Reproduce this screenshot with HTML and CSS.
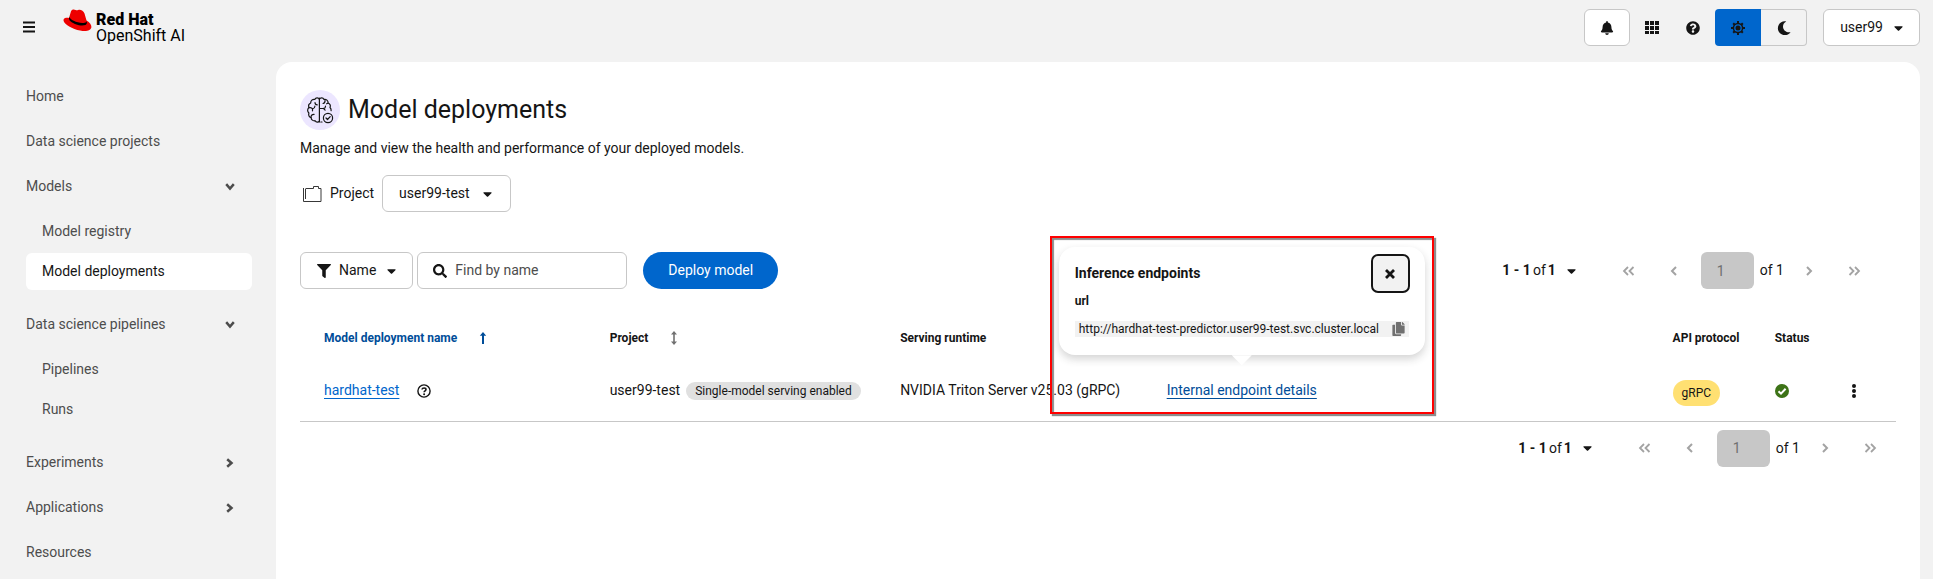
FILE: index.html
```html
<!DOCTYPE html>
<html lang="en">
<head>
<meta charset="utf-8">
<meta name="viewport" content="width=device-width, initial-scale=1">
<title>Model deployments | Red Hat OpenShift AI</title>
<link rel="stylesheet" href="styles.css">
</head>
<body>
<svg class="sprite" aria-hidden="true">
  <symbol id="bell" viewBox="0 0 448 512"><path d="M224 512c35.32 0 63.97-28.65 63.97-64H160.03c0 35.35 28.65 64 63.97 64zm215.39-149.71c-19.32-20.76-55.47-51.99-55.47-154.29 0-77.7-54.48-139.9-127.94-155.16V32c0-17.67-14.32-32-31.98-32s-31.98 14.33-31.98 32v20.84C118.56 68.1 64.08 130.3 64.08 208c0 102.3-36.15 133.53-55.47 154.29-6 6.45-8.66 14.16-8.61 21.71.11 16.4 12.98 32 32.1 32h383.8c19.12 0 32-15.6 32.1-32 .05-7.55-2.61-15.27-8.61-21.71z"/></symbol>
  <symbol id="grid" viewBox="0 0 14 14"><path d="M0 0h4v4H0zM5 0h4v4H5zM10 0h4v4h-4zM0 5h4v4H0zM5 5h4v4H5zM10 5h4v4h-4zM0 10h4v3H0zM5 10h4v3H5zM10 10h4v3h-4z"/></symbol>
  <symbol id="help" viewBox="0 0 512 512"><path d="M504 256c0 136.997-111.043 248-248 248S8 392.997 8 256C8 119.083 119.043 8 256 8s248 111.083 248 248zM262.655 90c-54.497 0-89.255 22.957-116.549 63.758-3.536 5.286-2.353 12.415 2.715 16.258l34.699 26.31c5.205 3.947 12.621 3.008 16.665-2.122 17.864-22.658 30.113-35.797 57.303-35.797 20.429 0 45.698 13.148 45.698 32.958 0 14.976-12.363 22.667-32.534 33.976C247.128 238.528 216 254.941 216 296v4c0 6.627 5.373 12 12 12h56c6.627 0 12-5.373 12-12v-1.333c0-28.462 83.186-29.647 83.186-106.667 0-58.002-60.165-102-116.531-102zM256 338c-25.365 0-46 20.635-46 46 0 25.364 20.635 46 46 46s46-20.636 46-46c0-25.365-20.635-46-46-46z"/></symbol>
  <symbol id="help-outline" viewBox="0 0 14 14"><circle cx="7" cy="7" r="6.1" fill="none" stroke="currentColor" stroke-width="1.4"/><path d="M5 5.5C5.2 3.5 9 3.500 9 5.500C9 6.900 7.100 6.800 7.100 8.300" fill="none" stroke="currentColor" stroke-width="1.6"/><circle cx="7.100" cy="10.300" r="1"/></symbol>
  <symbol id="sun" viewBox="0 0 16 16"><g fill="none" stroke="currentColor"><circle cx="8" cy="8" r="4.600" stroke-width="1.500"/><path stroke-width="2" d="M8 1v2.500M8 12.500V15M1 8h2.500M12.500 8H15M3.200 3.200l1.500 1.500M11.300 11.300l1.500 1.500M3.200 12.800l1.500-1.500M11.300 4.700l1.500-1.500"/></g><circle cx="8" cy="8" r="2.500"/></symbol>
  <symbol id="moon" viewBox="0 0 14 14"><path d="M7.600.2A7 7 0 1 0 13.600 11.200C9.500 12 6 9.200 6 5.500 6 3.300 7.200 1.400 9.200.4 8.700.2 8.100.2 7.600.2z"/></symbol>
  <symbol id="caret" viewBox="0 0 320 512"><path d="M31.300 192h257.300c17.800 0 26.700 21.500 14.100 34.100L174.100 354.800c-7.800 7.800-20.500 7.800-28.300 0L17.200 226.100C4.600 213.500 13.500 192 31.300 192z"/></symbol>
  <symbol id="filter" viewBox="0 0 512 512"><path d="M487.976 0H24.028C2.710 0-8.047 25.866 7.058 40.971L192 225.941V432c0 7.831 3.821 15.170 10.237 19.662l80 55.980C298.020 518.690 320 507.493 320 487.980V225.941l184.947-184.970C520.021 25.896 509.338 0 487.976 0z"/></symbol>
  <symbol id="search" viewBox="0 0 512 512"><path d="M505 442.700L405.300 343c-4.500-4.500-10.600-7-17-7H372c27.600-35.300 44-79.700 44-128C416 93.100 322.900 0 208 0S0 93.100 0 208s93.100 208 208 208c48.300 0 92.700-16.400 128-44v16.300c0 6.400 2.500 12.500 7 17l99.700 99.700c9.400 9.400 24.600 9.400 33.900 0l28.300-28.300c9.400-9.400 9.400-24.600.1-34zM208 336c-70.700 0-128-57.200-128-128 0-70.700 57.200-128 128-128 70.700 0 128 57.200 128 128 0 70.700-57.200 128-128 128z"/></symbol>
  <symbol id="copy" viewBox="0 0 448 512"><path d="M320 448v40c0 13.255-10.745 24-24 24H24c-13.255 0-24-10.745-24-24V120c0-13.255 10.745-24 24-24h72v296c0 30.879 25.121 56 56 56h168zm0-344V0H152c-13.255 0-24 10.745-24 24v368c0 13.255 10.745 24 24 24h272c13.255 0 24-10.745 24-24V128H344c-13.200 0-24-10.800-24-24zm120.971-31.029L375.029 7.029A24 24 0 0 0 358.059 0H352v96h96v-6.059a24 24 0 0 0-7.029-16.970z"/></symbol>
  <symbol id="chevron" viewBox="0 0 10 14"><path d="M2.200 3.200L6.500 7l-4.300 3.800" fill="none" stroke="currentColor" stroke-width="2.500"/></symbol>
  <symbol id="angle" viewBox="0 0 8 14"><path d="M2 3l4 4-4 4" fill="none" stroke="currentColor" stroke-width="2"/></symbol>
  <symbol id="angles" viewBox="0 0 14 14"><path d="M2.500 3l4 4-4 4M8 3l4 4-4 4" fill="none" stroke="currentColor" stroke-width="1.800"/></symbol>
  <symbol id="arrow-up" viewBox="0 0 8 14"><path d="M4 1L.8 4.800h2.200V13h2V4.800h2.200z"/></symbol>
  <symbol id="arrows-v" viewBox="0 0 8 14"><path d="M4 0L1 3.400h2.200v7.200H1L4 14l3-3.400H4.800V3.400H7z"/></symbol>
</svg>

<header class="masthead">
  <div class="brand">
    <button class="plain menu" aria-label="Global navigation"><svg width="12" height="12" viewBox="0 0 12 12"><path d="M0 .5h12v2H0zM0 5h12v2H0zM0 9.500h12v2H0z"/></svg></button>
    <a class="logo" href="#">
      <svg class="hat" width="29" height="23" viewBox="0 0 29 23" aria-hidden="true">
        <path d="M8 2.200C8.800.3 11 0 12.600 1.100c.9.500 1.700.2 2.600-.2 2.300-.8 5.300.8 6.300 3.600l2 7C27 13.200 28.500 16 28.400 18c-.4 4-5.800 4.800-11.300 3.500C9.800 20.100.9 15.300.5 11.400.3 8.800 3.700 8.600 6 8.900z" fill="#e00"/>
        <path d="M6.300 7.800c.3 3 9.500 7.200 15.300 6 1.700-.4 2.100-1.100 1.800-2.600l.5 2.600c.1 3.600-7 3.200-11.200 1.500-3.300-1.300-6.800-3.500-6.700-5.700z" fill="#000"/>
      </svg>
      <span class="wordmark"><strong>Red Hat</strong><span>OpenShift AI</span></span>
    </a>
  </div>
  <div class="tools">
    <button class="box bell" aria-label="Notifications"><svg width="14" height="14"><use href="#bell"/></svg></button>
    <button class="plain tool" aria-label="Application launcher"><svg width="14" height="14"><use href="#grid"/></svg></button>
    <button class="plain tool" aria-label="Help"><svg width="14" height="14"><use href="#help"/></svg></button>
    <div class="theme" role="group" aria-label="Theme">
      <button class="on" aria-label="Light theme" aria-pressed="true"><svg width="16" height="16"><use href="#sun"/></svg></button>
      <button aria-label="Dark theme" aria-pressed="false"><svg width="14" height="14"><use href="#moon"/></svg></button>
    </div>
    <button class="box user">user99 <svg width="9" height="14"><use href="#caret"/></svg></button>
  </div>
</header>

<div class="shell">
  <nav class="sidebar" aria-label="Main">
    <ul class="nav">
      <li><a href="#">Home</a></li>
      <li><a href="#">Data science projects</a></li>
      <li>
        <button aria-expanded="true">Models <svg class="down" width="10" height="14"><use href="#chevron"/></svg></button>
        <ul class="subnav">
          <li><a href="#">Model registry</a></li>
          <li><a class="current" href="#" aria-current="page">Model deployments</a></li>
        </ul>
      </li>
      <li>
        <button aria-expanded="true">Data science pipelines <svg class="down" width="10" height="14"><use href="#chevron"/></svg></button>
        <ul class="subnav">
          <li><a href="#">Pipelines</a></li>
          <li><a href="#">Runs</a></li>
        </ul>
      </li>
      <li><button aria-expanded="false">Experiments <svg width="10" height="14"><use href="#chevron"/></svg></button></li>
      <li><button aria-expanded="false">Applications <svg width="10" height="14"><use href="#chevron"/></svg></button></li>
      <li><a href="#">Resources</a></li>
    </ul>
  </nav>

  <main class="main">
    <div class="title">
      <span class="badge">
        <svg class="line" width="28" height="28" viewBox="0 0 28 28" stroke="#151515" stroke-width="1.200" stroke-linecap="round" stroke-linejoin="round" aria-hidden="true">
          <path d="M13.400 2v24"/>
          <path d="M13.400 3.200C12.500 1.400 9.700 1.400 8.800 3.400 6.500 3 4.600 4.600 4.700 7 2.900 7.800 2.300 9.800 3 11.500 1.200 13 1.200 15.600 2.900 17c-.7 2.200.2 4 2.200 4.600.1 2.200 1.900 3.500 4 3.100 1 1.700 3.300 1.800 4.300.4"/>
          <path d="M13.400 3.200c.9-1.800 3.700-1.800 4.600.2 2.300-.4 4.200 1.200 4.100 3.600 1.800.8 2.600 2.800 1.900 4.500.9.900 1.300 2 1.100 3.200"/>
          <path d="M9 6.500c0 1.500 1 2.300 2.300 2.300M3 11.700c1.500-.4 2.800 0 3.500 1.200 1.500-.4 2.300-1.200 2.400-2.700M6.500 13v1.800M5 21.300c0-1.900 1.300-3.100 3.100-3M19 4.500c.2 1.500-.5 2.600-1.900 3M13.600 12.500h4c1.200-.2 1.900-1 1.900-2.300M17.600 12.500l1.500 1.600M22 7.300l-1.400.5"/>
          <path d="M14.800 26h1.200"/>
          <circle cx="22" cy="22" r="4.600"/>
          <path d="M20 22l1.500 1.500 2.700-2.900"/>
        </svg>
      </span>
      <h1>Model deployments</h1>
    </div>
    <p class="lead">Manage and view the health and performance of your deployed models.</p>

    <div class="project">
      <svg class="line" width="19" height="16" viewBox="0 0 19 16" stroke="#383838" aria-hidden="true"><path d="M.5 2v13.500h17.500v-13h-2.500v-2h-5v2H3M2.500 2.500v10.500"/></svg>
      <span>Project</span>
      <button class="box select">user99-test <svg width="9" height="14"><use href="#caret"/></svg></button>
    </div>

    <div class="toolbar">
      <button class="box name"><svg width="14" height="14"><use href="#filter"/></svg>Name <svg width="9" height="14"><use href="#caret"/></svg></button>
      <label class="find"><svg width="14" height="14"><use href="#search"/></svg><input type="text" placeholder="Find by name" aria-label="Find by name"></label>
      <button class="primary">Deploy model</button>
      <div class="pager">
        <button class="plain count"><span class="range"><b>1 - 1</b> <span>of</span> <b>1</b></span> <svg width="9" height="14"><use href="#caret"/></svg></button>
        <button class="plain step" disabled aria-label="First page"><svg class="back" width="14" height="14"><use href="#angles"/></svg></button>
        <button class="plain step" disabled aria-label="Previous page"><svg class="back" width="8" height="14"><use href="#angle"/></svg></button>
        <input type="text" value="1" disabled aria-label="Current page">
        <span class="total">of 1</span>
        <button class="plain step" disabled aria-label="Next page"><svg width="8" height="14"><use href="#angle"/></svg></button>
        <button class="plain step" disabled aria-label="Last page"><svg width="14" height="14"><use href="#angles"/></svg></button>
      </div>
    </div>

    <table class="models">
      <colgroup><col class="c-name"><col class="c-project"><col class="c-runtime"><col class="c-endpoint"><col class="c-api"><col class="c-status"><col class="c-menu"></colgroup>
      <thead>
        <tr>
          <th scope="col"><button class="plain sort sorted">Model deployment name <svg width="8" height="14"><use href="#arrow-up"/></svg></button></th>
          <th scope="col"><button class="plain sort">Project <svg width="8" height="14"><use href="#arrows-v"/></svg></button></th>
          <th scope="col">Serving runtime</th>
          <th scope="col"></th>
          <th scope="col">API protocol</th>
          <th scope="col">Status</th>
          <th></th>
        </tr>
      </thead>
      <tbody>
        <tr>
          <td><span class="cell"><a href="#">hardhat-test</a><button class="plain info" aria-label="More info"><svg width="14" height="14"><use href="#help-outline"/></svg></button></span></td>
          <td><span class="cell tagged">user99-test <span class="tag">Single-model serving enabled</span></span></td>
          <td>NVIDIA Triton Server v25.03 (gRPC)</td>
          <td>
            <div class="anchor">
              <a class="active" href="#">Internal endpoint details</a>
              <div class="popover" role="dialog" aria-labelledby="pop-title">
                <h2 id="pop-title">Inference endpoints</h2>
                <button class="close" aria-label="Close"><svg width="10" height="10" viewBox="0 0 10 10"><path d="M1 1l8 8M9 1L1 9" stroke="currentColor" stroke-width="2.800"/></svg></button>
                <h3>url</h3>
                <div class="clip"><span>http://hardhat-test-predictor.user99-test.svc.cluster.local</span><button class="plain" aria-label="Copy"><svg width="13" height="14"><use href="#copy"/></svg></button></div>
              </div>
              <div class="highlight"></div>
            </div>
          </td>
          <td class="low"><span class="tag api">gRPC</span></td>
          <td><svg class="ok" width="14" height="14" viewBox="0 0 14 14" role="img" aria-label="Ready"><circle cx="7" cy="7" r="7" fill="#3d7317"/><path d="M3.500 7.300l2.500 2.400 4.600-4.900" fill="none" stroke="#fff" stroke-width="2"/></svg></td>
          <td><button class="plain kebab" aria-label="Actions"><svg width="4" height="14" viewBox="0 0 4 14"><circle cx="2" cy="2" r="2"/><circle cx="2" cy="7" r="2"/><circle cx="2" cy="12" r="2"/></svg></button></td>
        </tr>
      </tbody>
    </table>

    <div class="pager bottom">
      <button class="plain count"><span class="range"><b>1 - 1</b> <span>of</span> <b>1</b></span> <svg width="9" height="14"><use href="#caret"/></svg></button>
      <button class="plain step" disabled aria-label="First page"><svg class="back" width="14" height="14"><use href="#angles"/></svg></button>
      <button class="plain step" disabled aria-label="Previous page"><svg class="back" width="8" height="14"><use href="#angle"/></svg></button>
      <input type="text" value="1" disabled aria-label="Current page">
      <span class="total">of 1</span>
      <button class="plain step" disabled aria-label="Next page"><svg width="8" height="14"><use href="#angle"/></svg></button>
      <button class="plain step" disabled aria-label="Last page"><svg width="14" height="14"><use href="#angles"/></svg></button>
    </div>
  </main>
</div>
</body>
</html>
```
FILE: styles.css
```css
* { box-sizing: border-box; }

body {
  margin: 0;
  min-height: 100vh;
  display: flex;
  flex-direction: column;
  background: #f2f2f2;
  color: #151515;
  font: 14px/21px Roboto, "Liberation Sans", sans-serif;
}

button, input { font: inherit; color: inherit; margin: 0; }
button { cursor: pointer; }
svg { display: block; flex: none; fill: currentColor; }
.line { fill: none; }
ul { list-style: none; margin: 0; padding: 0; }
h1, h2, h3, p { margin: 0; }
.sprite { position: absolute; width: 0; height: 0; }

.plain { border: 0; padding: 0; background: none; }

.box {
  display: flex;
  align-items: center;
  height: 37px;
  padding: 0 16px;
  background: #fff;
  border: 1px solid #c7c7c7;
  border-radius: 6px;
}

/* Masthead */
.masthead {
  display: flex;
  justify-content: space-between;
  height: 62px;
  padding: 9px 13px 0 18px;
}
.brand { display: flex; align-items: flex-start; gap: 22px; }
.menu { padding: 12px 6px 0 5px; }
.logo { display: flex; gap: 4px; color: #000; text-decoration: none; }
.wordmark { display: flex; flex-direction: column; padding-top: 3px; font-size: 16px; line-height: 16px; }
.wordmark strong { font-weight: 900; }
.tools { display: flex; align-items: flex-start; }
.bell { padding: 0 15px; }
.tool { display: flex; align-items: center; justify-content: center; width: 41px; height: 37px; }
.bell + .tool { margin-left: 1px; }
.theme { display: flex; margin: 0 16px 0 2px; }
.theme button {
  display: flex;
  align-items: center;
  justify-content: center;
  width: 46px;
  height: 37px;
  padding: 0;
  border: 1px solid #c7c7c7;
  border-left: 0;
  border-radius: 0 4px 4px 0;
  background: none;
}
.theme .on { border: 0; border-radius: 4px 0 0 4px; background: #06c; }
.user { gap: 11px; }

/* Sidebar */
.shell { display: flex; flex: 1; }
.sidebar { flex: none; width: 276px; padding: 16px 24px 8px 26px; }
.nav { display: flex; flex-direction: column; gap: 8px; }
.nav a, .nav button {
  display: flex;
  align-items: center;
  justify-content: space-between;
  width: 100%;
  height: 37px;
  padding: 0 17px 0 0;
  border: 0;
  border-radius: 6px;
  background: none;
  color: #4d4d4d;
  text-decoration: none;
}
.subnav { display: flex; flex-direction: column; gap: 3px; padding: 8px 0; }
.nav .subnav a { padding-left: 16px; }
.nav .current { background: #fff; color: #151515; }
.down { transform: rotate(90deg); }

/* Page body */
.main {
  flex: 1;
  min-width: 0;
  margin-right: 13px;
  padding: 28px 24px;
  background: #fff;
  border-radius: 16px 16px 0 0;
}
.title { display: flex; align-items: center; gap: 8px; }
.badge {
  display: flex;
  align-items: center;
  justify-content: center;
  width: 40px;
  height: 40px;
  border-radius: 50%;
  background: #ece6ff;
}
.title h1 { font-size: 25px; line-height: 32px; font-weight: 400; }
.lead { margin-top: 8px; }
.project { display: flex; align-items: center; gap: 8px; margin-top: 16px; padding-left: 3px; }
.select { gap: 13px; padding: 0 18px 0 16px; }

.toolbar { display: flex; align-items: center; margin-top: 40px; }
.name { gap: 8px; }
.name svg:last-child { margin-left: 3px; }
.find {
  display: flex;
  align-items: center;
  gap: 8px;
  width: 210px;
  height: 37px;
  margin: 0 16px 0 4px;
  padding: 0 15px;
  border: 1px solid #c7c7c7;
  border-radius: 6px;
}
.find input { flex: 1; min-width: 0; border: 0; padding: 0; outline: 0; background: none; }
.find input::placeholder { color: #4d4d4d; }
.primary { height: 37px; padding: 0 25px; border: 0; border-radius: 999px; background: #06c; color: #fff; }

.pager { display: flex; align-items: center; gap: 8px; margin-left: auto; padding-right: 24px; }
.bottom { justify-content: flex-end; padding: 8px 8px 0 0; }
.count { display: flex; align-items: center; gap: 11px; margin-right: 27px; }
.range { display: flex; gap: 2px; }
.total { margin: 0 -2px; }
.step { display: flex; align-items: center; justify-content: center; width: 37px; height: 37px; color: #a3a3a3; }
.back { transform: rotate(180deg); }
.pager input {
  width: 53px;
  height: 37px;
  padding: 0 16px;
  border: 0;
  border-radius: 6px;
  background: #c7c7c7;
  color: #707070;
}

/* Deployments table */
.models { width: 100%; margin-top: 22px; border-collapse: collapse; table-layout: fixed; border-bottom: 1px solid #c7c7c7; }
.c-name { width: 18.4%; }
.c-project { width: 18.2%; }
.c-runtime { width: 16.7%; }
.c-endpoint { width: 31.7%; }
.c-api { width: 6.4%; }
.c-status { width: 3.3%; }
.models th, .models td { padding: 0 0 0 16px; text-align: left; white-space: nowrap; }
.models th:first-child, .models td:first-child { padding-left: 24px; }
.models th:last-child, .models td:last-child { padding-left: 0; }
.models th { height: 54px; font-size: 12px; font-weight: 700; }
.models td { height: 56px; padding-bottom: 4px; }
.models .low { padding-bottom: 0; }
.sort { display: flex; align-items: center; gap: 22px; font-weight: 700; }
.sort svg { color: #707070; }
.sorted, .sorted svg { color: #004d99; }
.models a { color: #06c; text-decoration: underline; text-underline-offset: 3px; }
.models .active { color: #004d99; }
.cell { display: flex; align-items: center; gap: 18px; }
.tagged { gap: 6px; }
.tag { display: inline-block; padding: 0 9px; border-radius: 9px; background: #e0e0e0; font-size: 12px; line-height: 18px; }
.api { border-radius: 13px; background: #ffe072; line-height: 26px; vertical-align: middle; }
.kebab { display: block; margin: 0 auto; padding: 0 8px; }

/* Endpoint popover */
.anchor { position: relative; width: max-content; }
.popover {
  position: absolute;
  bottom: calc(100% + 25px);
  left: 50%;
  width: 366px;
  padding: 16px 16px 18px;
  transform: translateX(-50%);
  border-radius: 16px;
  background: #fff;
  box-shadow: 0 4px 9px rgba(41, 41, 41, .2);
}
.popover::after {
  content: "";
  position: absolute;
  top: 100%;
  left: 50%;
  width: 20px;
  height: 10px;
  transform: translateX(-50%);
  background: #fff;
  clip-path: polygon(0 0, 100% 0, 50% 100%);
}
.popover h2 { font-size: 14px; line-height: 21px; font-weight: 700; }
.popover h3 { margin-top: 8px; font-size: 12px; line-height: 18px; font-weight: 700; }
.close {
  position: absolute;
  top: 7px;
  right: 15px;
  display: flex;
  align-items: center;
  justify-content: center;
  width: 39px;
  height: 39px;
  padding: 0;
  border: 2px solid #151515;
  border-radius: 7px;
  background: #f2f2f2;
}
.clip {
  display: flex;
  align-items: center;
  justify-content: space-between;
  height: 16px;
  margin-top: 11px;
  padding: 0 4px;
  background: #f2f2f2;
  font-size: 12px;
  line-height: 16px;
}
.clip button { color: #707070; }
.highlight {
  position: absolute;
  top: -144px;
  left: 50%;
  width: 384px;
  height: 178px;
  transform: translateX(-50%);
  border: 2px solid #f00;
  box-shadow: 2px 2px 1px #8c8c8c, inset 2px 2px 1px #8c8c8c;
  pointer-events: none;
}
```
